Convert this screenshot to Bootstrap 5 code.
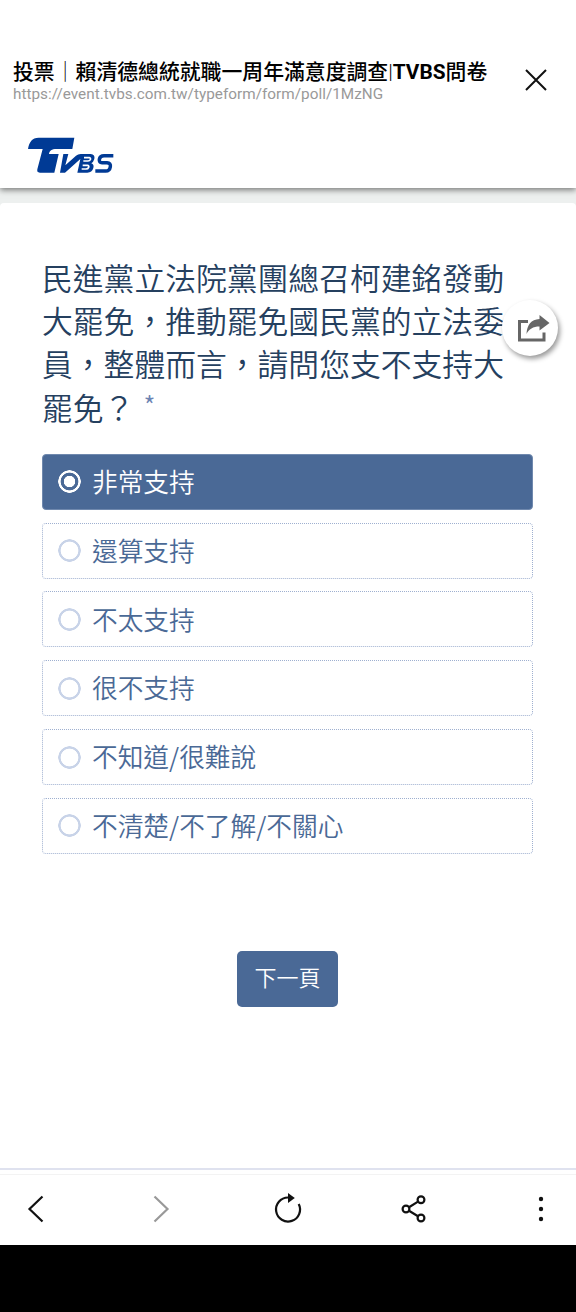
<!DOCTYPE html>
<html lang="zh-Hant">
<head>
<meta charset="utf-8">
<meta name="viewport" content="width=device-width, initial-scale=1">
<title>TVBS問卷</title>
<link href="https://cdn.jsdelivr.net/npm/bootstrap@5.3.0/dist/css/bootstrap.min.css" rel="stylesheet">
<style>
body{font-family:Roboto,"Noto Sans CJK TC",sans-serif;background:#edf0ef;height:1312px;overflow:hidden}
svg{display:block}
.titlebar{height:110px;padding:58px 23px 0 13px;color:#000;position:relative;z-index:3}
.page-title{font-size:20.85px;line-height:28px;font-weight:500}
.latin{font-weight:700;font-size:20.8px}
.thin-bar{font-weight:300}
.page-url{font-size:15.3px;line-height:18px;margin-top:-1px;color:#999;letter-spacing:.02px}
.close-btn{margin-top:9px;width:26px;height:26px}
.site-head{height:78px;padding:27px 28px 0;box-shadow:0 2px 6px rgba(0,0,0,.5);z-index:2}
.panel{margin-top:15px;height:967px;border-radius:4px 4px 0 0;padding:52px 43px 0 42px;border-bottom:2px solid #dfe2ef}
.question{font-size:30.8px;line-height:43.2px;color:#25405f;font-family:"Noto Sans CJK TC",sans-serif;font-weight:350;width:465px;white-space:nowrap}
.required{font-family:"Noto Sans CJK TC",sans-serif;font-size:26px;color:#6c84b3;margin-left:9px;position:relative;top:-4px;line-height:1}
.choices{margin-top:26px;gap:12.8px}
.choice{height:56px;border:1px dotted #9fb0d0;border-radius:4px;padding:0 15px 2px;gap:11px;font-family:"Noto Sans CJK TC",sans-serif;font-weight:350;font-size:25.7px;color:#4a6996;line-height:1}
.choice.selected{background:#4a6996;color:#fff;border:1px solid #7089ae}
.dot{width:23px;height:23px;border-radius:50%;position:relative;top:1px;background:radial-gradient(circle closest-side,transparent 8.5px,#c8d3e8 9.2px,#c8d3e8 11px,transparent 11.5px)}
.selected .dot{background:radial-gradient(circle closest-side,#fff 5.4px,transparent 6px,transparent 8.5px,#fff 9.2px,#fff 11px,transparent 11.5px)}
.next-btn{width:101px;height:56px;margin-top:97px;padding:0 0 4px;background:#4a6996;color:#fff;border-radius:5px;font-size:22px;font-weight:350;font-family:"Noto Sans CJK TC",sans-serif;border:0}
.toolbar{height:71px;border-top:1px solid #f3f3f3;margin-top:4px}
.foot{height:67px}
.share-float{position:absolute;left:502px;top:300px;width:56px;height:56px;border-radius:50%;box-shadow:2px 3px 5px rgba(0,0,0,.4);z-index:3}
</style>
</head>
<body class="d-flex flex-column">
<header class="titlebar bg-white d-flex justify-content-between flex-shrink-0">
  <div class="text-nowrap">
    <div class="page-title">投票<span class="thin-bar">｜</span>賴清德總統就職一周年滿意度調查<span class="thin-bar">|</span><span class="latin">TVBS</span>問卷</div>
    <div class="page-url">https://event.tvbs.com.tw/typeform/form/poll/1MzNG</div>
  </div>
  <svg class="close-btn me-1" viewBox="0 0 26 26" fill="none" stroke="#111" stroke-width="2"><path d="M3 3L23 23M23 3L3 23"/></svg>
</header>
<nav class="site-head bg-white position-relative flex-shrink-0">
  <svg width="86" height="36" viewBox="84 261 258 108" role="img" aria-label="TVBS">
    <path fill="#003a95" d="M84 297C88 276 96 263 116 263H223L217 297H170C154 297 149 302 147 312H176L163 368H120C112 368 111 364 112 358L128 297Z"/>
    <path fill="#003a95" d="M190 312H205L196 346L228 317Q234 312 242 312H272Q286 314 283 327Q280 337 274 340Q283 343 280 354Q276 368 262 368H232L241 327L195 368H180Z"/>
    <path fill="none" stroke="#fff" stroke-width="5" d="M252 323H268Q273 324 271 329Q269 333 264 333H250M248 346H262Q268 347 266 352Q264 357 258 357H245"/>
    <path fill="none" stroke="#003a95" stroke-width="10.500" d="M340 317H312Q300 317 298 328Q297 338 306 338H321Q333 339 331 350Q329 363 317 363H286"/>
  </svg>
</nav>
<main class="panel bg-white flex-shrink-0">
  <h1 class="question mb-0">民進黨立法院黨團總召柯建銘發動<br>大罷免，推動罷免國民黨的立法委<br>員，整體而言，請問您支不支持大<br>罷免？<span class="required">*</span></h1>
  <div class="choices d-flex flex-column">
    <div class="choice selected d-flex align-items-center"><span class="dot"></span>非常支持</div>
    <div class="choice d-flex align-items-center"><span class="dot"></span>還算支持</div>
    <div class="choice d-flex align-items-center"><span class="dot"></span>不太支持</div>
    <div class="choice d-flex align-items-center"><span class="dot"></span>很不支持</div>
    <div class="choice d-flex align-items-center"><span class="dot"></span>不知道/很難說</div>
    <div class="choice d-flex align-items-center"><span class="dot"></span>不清楚/不了解/不關心</div>
  </div>
  <button class="btn next-btn d-block mx-auto">下一頁</button>
</main>
<footer class="bg-white overflow-hidden flex-shrink-0">
  <div class="toolbar d-flex justify-content-between align-items-center">
    <svg width="72" height="70" viewBox="0 1175 72 70" fill="none" stroke="#111" stroke-width="2.200"><path d="M42.500 1196.500L29.500 1209L42.500 1221.500"/></svg>
    <svg width="72" height="70" viewBox="126 1175 72 70" fill="none" stroke="#999" stroke-width="2.200"><path d="M154.500 1196.500L167.500 1209L154.500 1221.500"/></svg>
    <svg width="72" height="70" viewBox="252 1175 72 70"><path d="M288 1197.500A12 12 0 1 0 298.700 1204" fill="none" stroke="#111" stroke-width="2.200"/><path fill="#111" d="M288 1193L294.800 1198L288 1203Z"/></svg>
    <svg width="72" height="70" viewBox="378 1175 72 70" fill="none" stroke="#111" stroke-width="2.200"><circle cx="406" cy="1209" r="3.400"/><circle cx="421" cy="1199.800" r="3.400"/><circle cx="421" cy="1218" r="3.400"/><path d="M409 1207.200L418 1201.600M409 1210.800L418 1216.200"/></svg>
    <svg width="72" height="70" viewBox="504 1175 72 70" fill="#111"><circle cx="541" cy="1199" r="2.200"/><circle cx="541" cy="1209" r="2.200"/><circle cx="541" cy="1219" r="2.200"/></svg>
  </div>
</footer>
<div class="foot bg-black flex-shrink-0"></div>
<div class="share-float bg-white">
  <svg width="56" height="56" viewBox="502 300 56 56"><path d="M528 321.500H519.500V340H544V332.500" fill="none" stroke="#666" stroke-width="3"/><path fill="#666" d="M539.500 315L549.500 323L539.500 330.500V326.500C533 326.500 529 329 526.500 334C527 325 531 319.500 539.500 319Z"/></svg>
</div>
<script src="https://cdn.jsdelivr.net/npm/bootstrap@5.3.0/dist/js/bootstrap.bundle.min.js"></script>
</body>
</html>
